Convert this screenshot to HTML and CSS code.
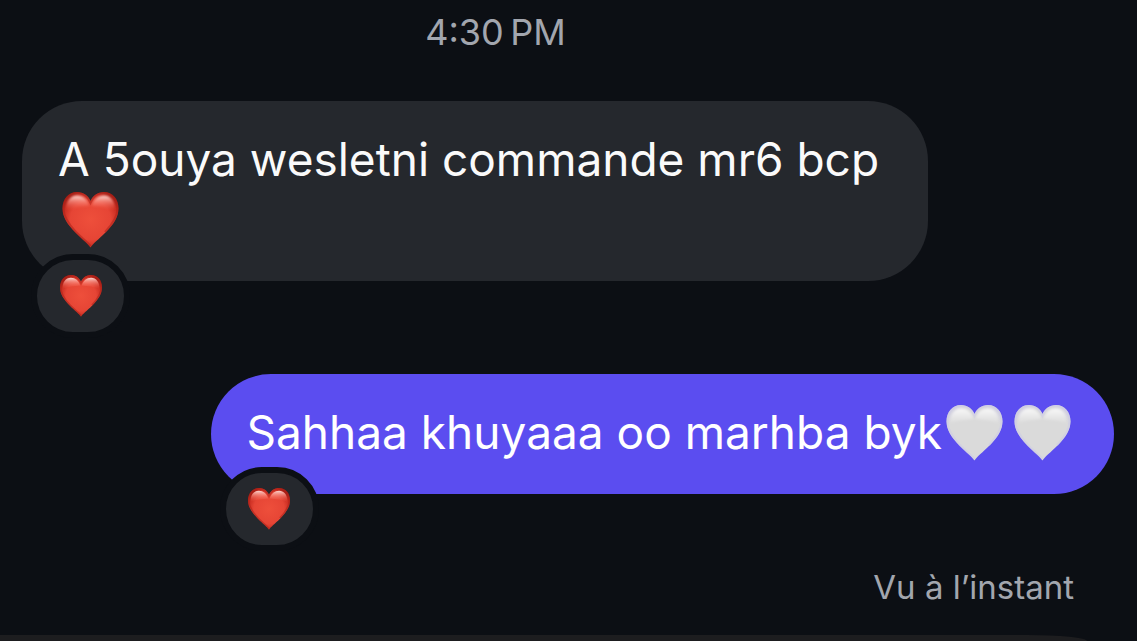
FILE: index.html
```html
<!DOCTYPE html>
<html lang="fr">
<head>
    <meta charset="UTF-8">
    <meta name="viewport" content="width=device-width, initial-scale=1.0">
    <title>Messages</title>
    <link rel="stylesheet" href="styles.css">
</head>
<body>
    <!-- Formes partagées des coeurs -->
    <svg class="defs" aria-hidden="true">
        <defs>
            <radialGradient id="redFill" cx="0.5" cy="0.5" r="0.6">
                <stop offset="0" stop-color="#ee4f3b"/>
                <stop offset="0.6" stop-color="#e64535"/>
                <stop offset="0.82" stop-color="#c92d21"/>
                <stop offset="1" stop-color="#8c120c"/>
            </radialGradient>
            <linearGradient id="redShine" x1="0" y1="0" x2="0" y2="1">
                <stop offset="0" stop-color="#ffe3de" stop-opacity="0.95"/>
                <stop offset="0.4" stop-color="#ff9f92" stop-opacity="0.6"/>
                <stop offset="1" stop-color="#f0503c" stop-opacity="0"/>
            </linearGradient>
            <radialGradient id="whiteFill" cx="0.5" cy="0.5" r="0.62">
                <stop offset="0" stop-color="#dadada"/>
                <stop offset="0.75" stop-color="#dadada"/>
                <stop offset="1" stop-color="#cfcde2"/>
            </radialGradient>
            <linearGradient id="whiteShine" x1="0" y1="0" x2="0" y2="1">
                <stop offset="0" stop-color="#fff" stop-opacity="0.8"/>
                <stop offset="1" stop-color="#fff" stop-opacity="0"/>
            </linearGradient>
            <filter id="soft"><feGaussianBlur stdDeviation="0.8"/></filter>
            <path id="shape" d="M28 55.500C26 52 20 47.500 13 40.500C5 32.500 0 25 0 16.500C0 7 6 0 14.500 0C21 0 25.500 3.500 28 9C30.500 3.500 35 0 41.500 0C50 0 56 7 56 16.500C56 25 51 32.500 43 40.500C36 47.500 30 52 28 55.500Z"/>
            <path id="edge" d="M28 54C26 51 20 46.500 13.500 40C6 32 1 25 1 16.500C1 7.500 6.500 1 14.500 1C21 1 25.500 5 28 11C30.500 5 35 1 41.500 1C49.500 1 55 7.500 55 16.500C55 25 50 32 42.500 40"/>
            <path id="shine" d="M4 19C2.500 9.500 8 3.500 14.500 3.500C20.500 3.500 25 7.500 27 14C20 15 10 15 4 19ZM52 19C53.500 9.500 48 3.500 41.500 3.500C35.500 3.500 31 7.500 29 14C36 15 46 15 52 19Z"/>
            <symbol id="redHeart" viewBox="0 0 56 56">
                <use href="#shape" fill="url(#redFill)"/>
                <use href="#edge" fill="none" stroke="#b3241b" stroke-opacity="0.6" stroke-width="2"/>
                <use href="#shine" fill="url(#redShine)" filter="url(#soft)"/>
            </symbol>
            <symbol id="whiteHeart" viewBox="0 0 56 56">
                <use href="#shape" fill="url(#whiteFill)"/>
                <use href="#edge" fill="none" stroke="#cfcde4" stroke-opacity="0.7" stroke-width="2"/>
                <use href="#shine" fill="url(#whiteShine)" filter="url(#soft)"/>
            </symbol>
        </defs>
    </svg>

    <main class="chat">
        <time class="timestamp" datetime="16:30">4:30&#8239;PM</time>

        <div class="message received">
            <p class="bubble">A 5ouya wesletni commande mr6 bcp <svg class="heart" role="img" aria-label="Coeur rouge"><use href="#redHeart"/></svg></p>
            <button type="button" class="reaction" aria-label="Réaction coeur"><svg class="heart-small"><use href="#redHeart"/></svg></button>
        </div>

        <div class="message sent">
            <p class="bubble">Sahhaa khuyaaa oo marhba byk<svg class="heart" role="img" aria-label="Coeur blanc"><use href="#whiteHeart"/></svg><svg class="heart" role="img" aria-label="Coeur blanc"><use href="#whiteHeart"/></svg></p>
            <button type="button" class="reaction" aria-label="Réaction coeur"><svg class="heart-small"><use href="#redHeart"/></svg></button>
        </div>

        <p class="status">Vu à l’instant</p>
    </main>

    <!-- Barre de saisie, en partie hors écran -->
    <footer class="composer"></footer>
</body>
</html>
```
FILE: styles.css
```css
body {
    margin: 0;
    height: 100vh;
    overflow: hidden;
    display: flex;
    flex-direction: column;
    background-color: #0c0f14;
    color: #fafafa;
    font-family: Inter, "Liberation Sans", sans-serif;
}

.defs {
    position: absolute;
    width: 0;
    height: 0;
}

.chat {
    flex: 1;
    display: flex;
    flex-direction: column;
    padding: 10px 23px 0 22px;
}

.timestamp {
    padding-right: 145px;
    text-align: center;
    font-size: 36px;
    line-height: 45px;
    color: #a2a6ae;
}

.message {
    position: relative;
    max-width: 83%;
}

.received {
    align-self: flex-start;
    margin-top: 46px;
}

.sent {
    align-self: flex-end;
    margin-top: 93px;
}

.bubble {
    margin: 0;
    padding: 28px 36px 32px;
    border-radius: 60px;
    font-size: 46px;
    line-height: 60px;
    background-color: #25282d;
}

.sent .bubble {
    background-color: #5b4df0;
    color: #fff;
}

.heart {
    width: 57px;
    height: 56px;
    margin: 0 7px 0 4px;
    vertical-align: -12px;
}

/* Pastille posée sur le bord inférieur de la bulle */
.reaction {
    position: absolute;
    left: 9px;
    bottom: -57px;
    display: flex;
    align-items: center;
    justify-content: center;
    box-sizing: border-box;
    width: 99px;
    height: 84px;
    padding: 0;
    border: 6px solid #0c0f14;
    border-radius: 42px;
    background-color: #25282d;
    cursor: pointer;
}

.heart-small {
    width: 42px;
    height: 42px;
}

.status {
    margin: 71px 40px 0 0;
    text-align: right;
    font-size: 33px;
    line-height: 45px;
    color: #a2a6ae;
}

.composer {
    flex: none;
    height: 6px;
    margin-right: 50px;
    border-top-right-radius: 60px 6px;
    background-color: #1d1d1f;
}
```
